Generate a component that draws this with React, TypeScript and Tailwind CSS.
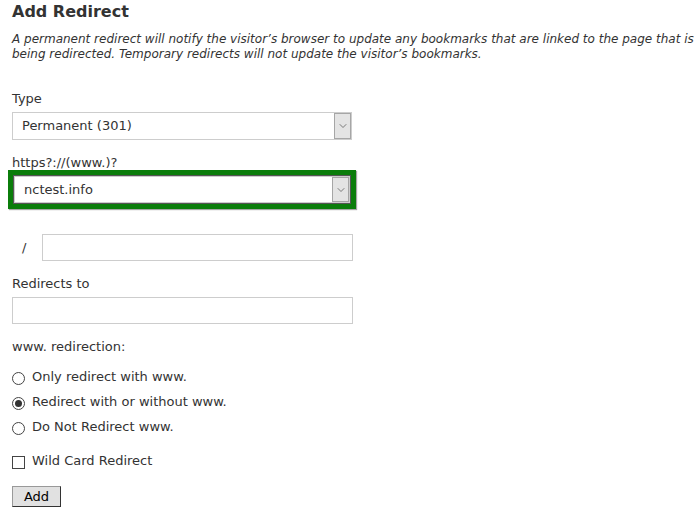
import { ChevronDown } from "lucide-react"

const font = { fontFamily: '"DejaVu Sans", Verdana, sans-serif' }

function SelectBox({ value }: { value: string }) {
  return (
    <div className="flex h-full w-full border border-[#cdcdcd] bg-white">
      <div className="flex flex-1 items-center pl-[9px] text-[13px] text-[#333]">{value}</div>
      <div className="flex w-[17px] items-center justify-center border border-[#a6a6a6] bg-[#e4e4e4]">
        <ChevronDown size={12} strokeWidth={1.5} className="text-[#555]" />
      </div>
    </div>
  )
}

function Radio({ checked, label }: { checked?: boolean; label: string }) {
  return (
    <div className="flex h-[25px] items-center">
      <span className="mt-[4px] flex h-[13px] w-[13px] items-center justify-center rounded-full border border-[#444] bg-white">
        {checked && <span className="h-[7px] w-[7px] rounded-full bg-[#333]" />}
      </span>
      <span className="ml-[7px]">{label}</span>
    </div>
  )
}

export default function App() {
  return (
    <div className="min-h-[512px] w-[694px] overflow-hidden bg-white pl-3 text-[13px] text-[#333]" style={font}>
      <h1 className="pt-[1px] text-[16px] font-bold leading-[22px] text-[#333]">Add Redirect</h1>
      <p className="mt-[9px] whitespace-nowrap text-[12px] italic leading-[15px] text-[#333]">
        A permanent redirect will notify the visitor’s browser to update any bookmarks that are linked to the page that is
        <br />
        being redirected. Temporary redirects will not update the visitor’s bookmarks.
      </p>

      <div className="mt-[29px] leading-[16px]">Type</div>
      <div className="mt-[5px] h-[28px] w-[340px]">
        <SelectBox value="Permanent (301)" />
      </div>

      <div className="mt-[15px] leading-[16px]">https?://(www.)?</div>
      <div className="-ml-1 -mt-[1px] h-[39px] w-[348px] border-[5px] border-[#0b7d0b] shadow-[1px_1px_1px_rgba(0,0,0,0.35)]">
        <div className="h-full w-full border border-[#555]">
          <SelectBox value="nctest.info" />
        </div>
      </div>

      <div className="mt-[25px] flex h-[27px] items-center">
        <span className="w-[30px] pl-[10px]">/</span>
        <div className="h-[27px] w-[311px] border border-[#cdcdcd] bg-white" />
      </div>

      <div className="mt-[15px] leading-[16px]">Redirects to</div>
      <div className="mt-[5px] h-[27px] w-[341px] border border-[#cdcdcd] bg-white" />

      <div className="mt-[15px] leading-[16px]">www. redirection:</div>
      <div className="mt-[9px]">
        <Radio label="Only redirect with www." />
        <Radio checked label="Redirect with or without www." />
        <Radio label="Do Not Redirect www." />
      </div>

      <div className="mt-[9px] flex h-[25px] items-center">
        <span className="mt-[4px] h-[13px] w-[13px] border border-[#444] bg-white" />
        <span className="ml-[7px]">Wild Card Redirect</span>
      </div>

      <button className="mt-[13px] block h-[21px] w-[49px] border border-t-[#999] border-l-[#999] border-r-[#333] border-b-[#333] bg-[#e1e1e1] text-[13px] leading-[19px] text-black">
        Add
      </button>
    </div>
  )
}
